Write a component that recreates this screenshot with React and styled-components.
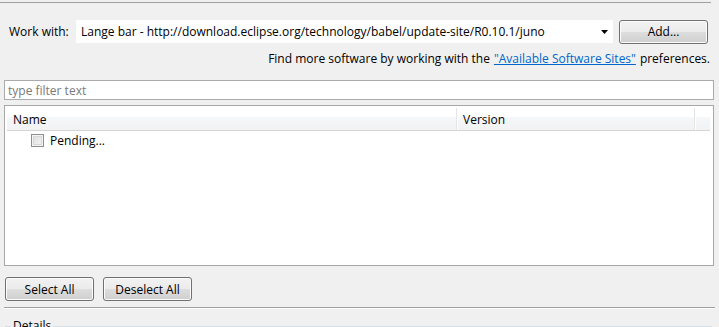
import React from "react";
import styled, { createGlobalStyle } from "styled-components";

const Global = createGlobalStyle`
  html, body { margin: 0; padding: 0; background: #f0f0f0; }
  body { font-family: "Open Sans", "Noto Sans", sans-serif; font-size: 12px; color: #000; }
`;

const Page = styled.div`
  width: 719px;
  height: 327px;
  overflow: hidden;
  background: #f0f0f0;
  display: flex;
  flex-direction: column;
  box-sizing: border-box;
  padding-top: 2px;
  & > * { flex-shrink: 0; }
`;

const TopRule = styled.div`
  height: 1px;
  width: 711px;
  background: #a0a0a0;
`;

const WorkRow = styled.div`
  display: flex;
  align-items: center;
  margin-top: 17px;
  height: 23px;
  padding-left: 9px;
`;

const Label = styled.span`
  width: 67px;
  white-space: nowrap;
`;

const Combo = styled.div`
  width: 537px;
  height: 23px;
  box-sizing: border-box;
  background: #fff;
  display: flex;
  align-items: center;
  padding-left: 5px;
  padding-right: 4px;
`;

const ComboText = styled.span`
  flex: 1;
  white-space: nowrap;
  overflow: hidden;
`;

const Arrow = styled.svg`
  width: 8px;
  height: 4px;
`;

const Button = styled.button`
  font: inherit;
  color: #000;
  width: ${(p) => p.$w || 89}px;
  height: 24px;
  box-sizing: border-box;
  border: 1px solid #707070;
  border-radius: 3px;
  background: linear-gradient(#f2f2f2 0%, #ebebeb 50%, #dddddd 51%, #cfcfcf 100%);
  box-shadow: inset 0 0 0 1px #fcfcfc;
  padding: 0;
  display: flex;
  align-items: center;
  justify-content: center;
`;

const AddButton = styled(Button)`
  margin-left: 6px;
`;

const FindRow = styled.div`
  display: flex;
  justify-content: flex-end;
  padding-right: 9px;
  margin-top: 5px;
  height: 20px;
  align-items: center;
  white-space: nowrap;
`;

const Link = styled.a`
  color: #0066cc;
  text-decoration: underline;
  margin: 0 4px;
`;

const Filter = styled.div`
  margin: 12px 0 0 4px;
  width: 710px;
  height: 20px;
  box-sizing: border-box;
  border: 1px solid #ababab;
  background: #fff;
  color: #7a7a7a;
  display: flex;
  align-items: center;
  padding-left: 3px;
`;

const Table = styled.div`
  margin: 5px 0 0 4px;
  width: 710px;
  height: 161px;
  box-sizing: border-box;
  border: 1px solid #a8a8a8;
  background: #fff;
  padding: 2px 3px 0 2px;
  display: flex;
  flex-direction: column;
`;

const Header = styled.div`
  display: grid;
  grid-template-columns: 450px 238px 1fr;
  height: 22px;
  flex-shrink: 0;
  border-bottom: 1px solid #d5d5d5;
  background: linear-gradient(#ffffff 0%, #ffffff 40%, #f6f7f9 41%, #f1f2f4 100%);
`;

const HeaderCell = styled.div`
  display: flex;
  align-items: center;
  padding-left: 6px;
  border-right: ${(p) => (p.$last ? "none" : "1px solid #e3e4e6")};
  box-shadow: ${(p) => (p.$last ? "none" : "1px 0 0 #fff")};
  color: #000;
`;

const Row = styled.div`
  display: flex;
  align-items: center;
  height: 16px;
  padding-left: 24px;
  margin-top: 1px;
`;

const Check = styled.span`
  width: 13px;
  height: 13px;
  box-sizing: border-box;
  border: 1px solid #8f8f8f;
  background: linear-gradient(135deg, #dcdcdc, #f6f6f6);
  box-shadow: inset 0 0 0 1px #f4f4f4, inset 0 0 0 2px #d8d8d8;
  margin-right: 6px;
`;

const ButtonRow = styled.div`
  display: flex;
  gap: 9px;
  margin: 11px 0 0 5px;
`;

const Separator = styled.div`
  margin: 6px 0 0 4px;
  width: 711px;
  height: 1px;
  background: #a0a0a0;
  box-shadow: 0 1px 0 #fff;
`;

const Group = styled.div`
  margin: 18px 0 0 5px;
  width: 707px;
  position: relative;
  border-top: 1px solid #d5dfe5;
  height: 20px;
`;

const GroupTitle = styled.span`
  position: absolute;
  left: 6px;
  top: -10px;
  padding: 0 2px;
  background: #f0f0f0;
  color: #000;
`;

export default function App() {
  return (
    <>
      <Global />
      <Page>
        <TopRule />
        <WorkRow>
          <Label>Work with:</Label>
          <Combo>
            <ComboText>Lange bar - http://download.eclipse.org/technology/babel/update-site/R0.10.1/juno</ComboText>
            <Arrow viewBox="0 0 8 4">
              <path d="M0 0 H7 L3.5 4 Z" fill="#000" />
            </Arrow>
          </Combo>
          <AddButton>Add...</AddButton>
        </WorkRow>
        <FindRow>
          Find more software by working with the
          <Link>"Available Software Sites"</Link>
          preferences.
        </FindRow>
        <Filter>type filter text</Filter>
        <Table>
          <Header>
            <HeaderCell>Name</HeaderCell>
            <HeaderCell>Version</HeaderCell>
            <HeaderCell $last />
          </Header>
          <Row>
            <Check />
            Pending...
          </Row>
        </Table>
        <ButtonRow>
          <Button>Select All</Button>
          <Button>Deselect All</Button>
        </ButtonRow>
        <Separator />
        <Group>
          <GroupTitle>Details</GroupTitle>
        </Group>
      </Page>
    </>
  );
}
